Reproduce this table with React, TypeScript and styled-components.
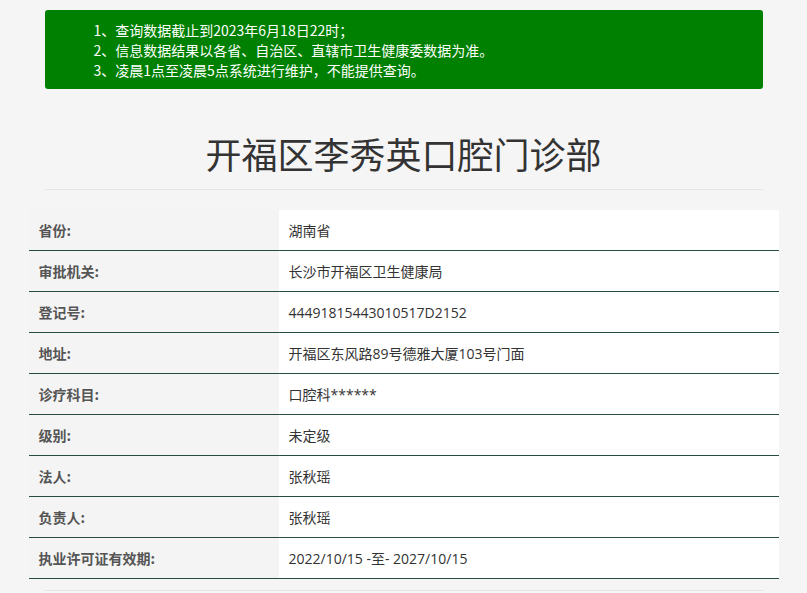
import React from "react";
import styled, { createGlobalStyle } from "styled-components";

const GlobalStyle = createGlobalStyle`
  html, body {
    margin: 0;
    padding: 0;
    background: #f5f5f5;
  }
  body {
    font-family: "Open Sans", "Noto Sans CJK SC", sans-serif;
    color: #333;
  }
`;

const Page = styled.div`
  width: 750px;
  margin: 0 auto;
  padding-top: 10px;
`;

const Notice = styled.div`
  margin: 0 16px;
  background: #008000;
  border-radius: 3px;
  padding: 10px 15px 9px 49px;
  color: #fff;
  font-family: "Noto Sans CJK SC", sans-serif;
  font-size: 14px;
  line-height: 20px;
`;

const NoticeLine = styled.div`
  white-space: nowrap;
`;

const Title = styled.h1`
  margin: 44px 0 16px;
  text-align: center;
  font-family: "Noto Sans CJK SC", sans-serif;
  font-weight: 400;
  font-size: 36px;
  line-height: 40px;
  color: #333;
`;

const Rule = styled.hr<{ $gap: number }>`
  margin: 0 16px ${(p) => p.$gap}px;
  border: 0;
  border-top: 1px solid #e6e6e6;
  height: 0;
`;

const Table = styled.div`
  display: grid;
  grid-template-columns: 250px 500px;
`;

const Label = styled.div`
  height: 40px;
  display: flex;
  align-items: center;
  padding-left: 10px;
  border-bottom: 1px solid #264d3e;
  background: #f4f4f4;
  font-family: "Noto Sans CJK SC", sans-serif;
  font-size: 14px;
  font-weight: 700;
  color: #555;
`;

const Value = styled.div`
  height: 40px;
  display: flex;
  align-items: center;
  padding-left: 10px;
  border-bottom: 1px solid #264d3e;
  background: #fff;
  font-family: "Open Sans", "Noto Sans CJK SC", sans-serif;
  font-size: 14px;
  color: #333;
`;

const rows: [string, string][] = [
  ["省份:", "湖南省"],
  ["审批机关:", "长沙市开福区卫生健康局"],
  ["登记号:", "44491815443010517D2152"],
  ["地址:", "开福区东风路89号德雅大厦103号门面"],
  ["诊疗科目:", "口腔科******"],
  ["级别:", "未定级"],
  ["法人:", "张秋瑶"],
  ["负责人:", "张秋瑶"],
  ["执业许可证有效期:", "2022/10/15 -至- 2027/10/15"],
];

export default function App() {
  return (
    <>
      <GlobalStyle />
      <Page>
        <Notice>
          <NoticeLine>1、查询数据截止到2023年6月18日22时；</NoticeLine>
          <NoticeLine>2、信息数据结果以各省、自治区、直辖市卫生健康委数据为准。</NoticeLine>
          <NoticeLine>3、凌晨1点至凌晨5点系统进行维护，不能提供查询。</NoticeLine>
        </Notice>
        <Title>开福区李秀英口腔门诊部</Title>
        <Rule $gap={20} />
        <Table>
          {rows.map(([k, v]) => (
            <React.Fragment key={k}>
              <Label>{k}</Label>
              <Value>{v}</Value>
            </React.Fragment>
          ))}
        </Table>
        <Rule $gap={0} style={{ marginTop: 11 }} />
      </Page>
    </>
  );
}
